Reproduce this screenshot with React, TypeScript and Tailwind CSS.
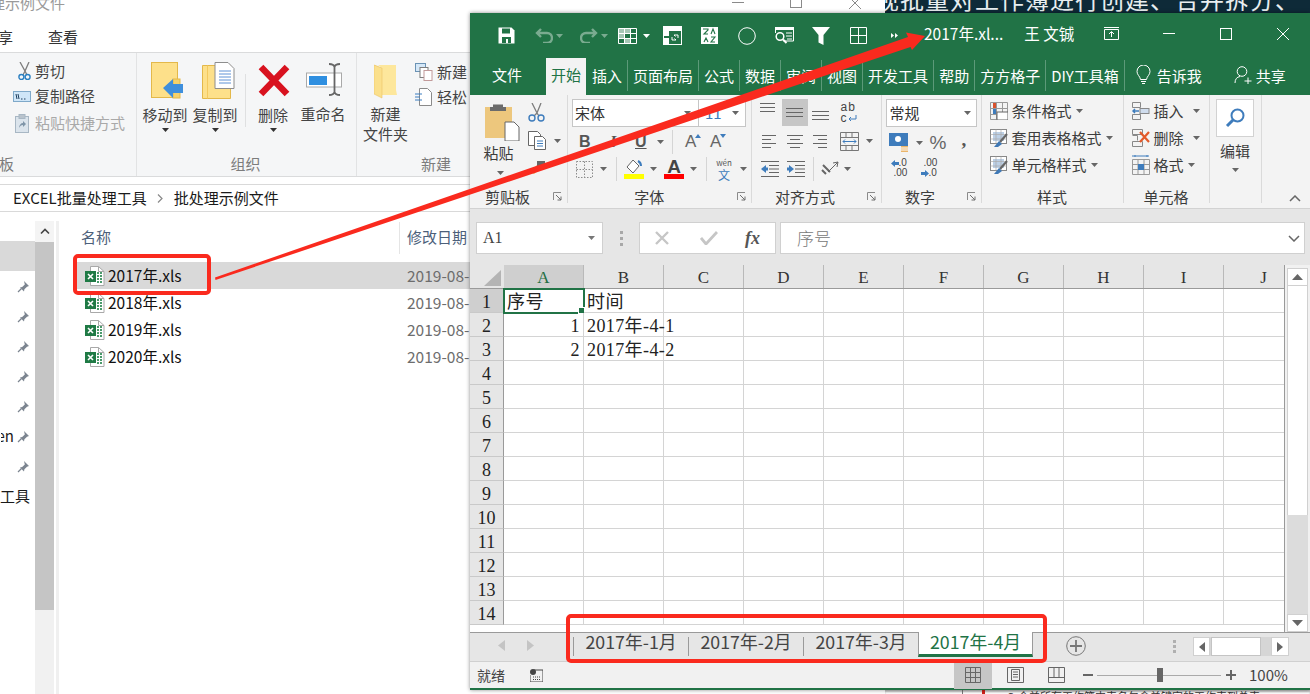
import React from "react";

const S = ({ w, h, vb, children, className }: { w: number; h: number; vb?: string; children: React.ReactNode; className?: string }) => (
  <svg width={w} height={h} viewBox={vb ?? `0 0 ${w} ${h}`} className={"shrink-0 block " + (className ?? "")} fill="none">{children}</svg>
);
const Caret = ({ c = "#666" }: { c?: string }) => (
  <S w={7} h={4}><path d="M0 0h7L3.500 4z" fill={c} /></S>
);

const Launcher = () => (
  <S w={9} h={9}><path d="M0.500 8V0.500H8" stroke="#8a8a8a" /><path d="M3 3l5 5M8 4.500V8H4.500" stroke="#6f6f6f" /></S>
);

const XlsIcon = () => (
  <S w={20} h={20}>
    <path d="M5.500 0.500h8l5.500 5v14H5.500z" fill="#fff" stroke="#a9a9a9" />
    <path d="M13.500 0.500v5H19" stroke="#a9a9a9" />
    <path d="M12 7h5M12 10h5M12 13h5M12 16h5" stroke="#4a9a6b" strokeWidth="2" strokeDasharray="2 1" />
    <rect x="0" y="5" width="11" height="11" fill="#1f7a45" />
    <path d="M3 8l5 5M8 8l-5 5" stroke="#fff" strokeWidth="1.600" />
  </S>
);

const Pin = () => (
  <S w={13} h={13}>
    <path d="M7 1l5 5-2 .7-2.600 2.600-.4 2.200L3 7.500l2.200-.4L7.800 4.500z" fill="#7c8590" />
    <path d="M4.500 8.500L1 12" stroke="#7c8590" strokeWidth="1.300" />
  </S>
);

function Explorer() {
  const pins = [0, 1, 2, 3, 4, 5, 6];
  return (
    <div className="absolute left-0 top-0 w-[885px] h-[694px] bg-white flex flex-col overflow-hidden">
      <div className="h-[27px] flex justify-between shrink-0 overflow-hidden">
        <div className="text-[15px] leading-[16px] -mt-[5px] -ml-[10px] text-[#9a9a9a] whitespace-nowrap">理示例文件</div>
        <div className="flex w-[130px] mr-[23px] gap-[46px] items-start">
          <div className="w-[12px] h-px bg-[#8a8a8a] mt-[2px]" />
          <div className="w-[12px] h-[8px] border border-t-0 border-[#8a8a8a]" />
          <S w={14} h={9}><path d="M1 -3l12 12M13 -3L1 9" stroke="#8a8a8a" /></S>
        </div>
      </div>
      <div className="h-[26px] shrink-0 flex text-[15px] leading-[20px] text-[#333] border-b border-[#dadbdc] pb-[6px]">
        <span className="w-[13px] overflow-hidden flex justify-end">享</span>
        <span className="ml-[35px]">查看</span>
      </div>
      <div className="h-[124px] shrink-0 bg-[#f5f6f7] border-b border-[#dadbdc] flex text-[15px] leading-[20px] text-[#444]">
        <div className="w-[137px] border-r border-[#e2e3e4] flex flex-col relative">
          <div className="flex flex-col pl-[13px] pt-[8px] gap-[5px]">
            <div className="flex items-center h-[20px]">
              <div className="w-[22px] flex justify-center">
                <S w={13} h={18}><path d="M2 0l5 9 4-9M7 9l-2 4M7 9l2 4" stroke="#7d7d7d" strokeWidth="1.300" /><circle cx="3.400" cy="15" r="2.500" stroke="#2a7fc1" strokeWidth="1.400" /><circle cx="9.600" cy="15" r="2.500" stroke="#2a7fc1" strokeWidth="1.400" /></S>
              </div>
              <span>剪切</span>
            </div>
            <div className="flex items-center h-[20px]">
              <div className="w-[22px] flex">
                <S w={18} h={11}><rect x="0.500" y="0.500" width="17" height="10" fill="#cfe6f8" stroke="#7fa9c9" /><path d="M3 3l1 5M5 3l1 5M8 8h1.500M11 8h1.500" stroke="#1c3d5c" /></S>
              </div>
              <span>复制路径</span>
            </div>
            <div className="flex items-center h-[20px] mt-[2px]">
              <div className="w-[22px] flex pl-[2px]">
                <S w={15} h={19}><rect x="0.500" y="2.500" width="13" height="16" fill="#dbe4ec" stroke="#a8b7c4" /><rect x="4" y="0.500" width="6" height="4" fill="#b9c3cc" stroke="#a8b7c4" /><path d="M4 14c0-3 2-5 4-5V7l3 3-3 3v-2c-2 0-3 1-4 3z" fill="#7f95a8" /></S>
              </div>
              <span className="text-[#a9a9a9]">粘贴快捷方式</span>
            </div>
          </div>
          <div className="absolute left-0 bottom-[2px] w-[14px] overflow-hidden text-[#7c7c7c] flex justify-end h-[20px]">板</div>
        </div>
        <div className="w-[220px] border-r border-[#e2e3e4] flex flex-col items-center">
          <div className="flex pt-[9px] h-[98px] w-full">
            <div className="w-[50px] ml-[3px] flex flex-col items-center">
              <div className="ml-[5px]">
                <S w={33} h={37}><rect x="0.500" y="0.500" width="26" height="35" fill="#fde08a" stroke="#e3b84a" /><rect x="22" y="17" width="7" height="19" fill="#f6d26b" stroke="#e3b84a" /><path d="M12 26l10-9v5h10v9H22v5z" fill="#3f8fdc" /></S>
              </div>
              <span className="mt-[6px] whitespace-nowrap">移动到</span>
              <div className="mt-[3px]"><Caret c="#333" /></div>
            </div>
            <div className="w-[50px] flex flex-col items-center">
              <div className="ml-[6px]">
                <S w={33} h={37}><path d="M0.500 3.500h28v33H0.500z" fill="#fde08a" stroke="#e3b84a" /><path d="M5.500 3.500v33" stroke="#f3c95f" /><path d="M13 0.500h13l6 6v20H13z" fill="#fff" stroke="#8e8e8e" /><path d="M17 9h12M17 12h12M17 15h12M17 18h12M17 21h12" stroke="#5f92d6" /></S>
              </div>
              <span className="mt-[6px] whitespace-nowrap">复制到</span>
              <div className="mt-[3px]"><Caret c="#333" /></div>
            </div>
            <div className="w-px h-[53px] bg-[#dfe0e1] mt-[12px] ml-[5px]" />
            <div className="w-[40px] ml-[7px] flex flex-col items-center">
              <div className="mt-[2px] ml-[2px]">
                <S w={32} h={33}><path d="M3 3l26 27M29 3L3 30" stroke="#d8121f" strokeWidth="6.500" /></S>
              </div>
              <span className="mt-[8px] whitespace-nowrap">删除</span>
              <div className="mt-[3px]"><Caret c="#333" /></div>
            </div>
            <div className="w-[50px] ml-[5px] flex flex-col items-center">
              <div className="ml-[2px] mt-[1px]">
                <S w={37} h={33}><rect x="0.500" y="10" width="35" height="14" fill="#fff" stroke="#a9a9a9" /><rect x="3" y="13" width="18" height="9" fill="#2f8fe0" /><path d="M23 1c4 0 5 1 5.500 3v25c.5 2 1.500 3 5.500 3M34 1c-4 0-5 1-5.500 3M23 32c4 0 5-1 5.500-3" stroke="#666" strokeWidth="1.800" /></S>
              </div>
              <span className="mt-[8px] whitespace-nowrap">重命名</span>
            </div>
          </div>
          <div className="text-[#7c7c7c] mt-[3px] -ml-[2px]">组织</div>
        </div>
        <div className="flex-1 flex flex-col relative">
          <div className="flex h-[98px] pt-[9px] w-[528px]">
            <div className="w-[47px] ml-[5px] flex flex-col items-center">
              <div className="ml-[1px] mt-[2px]">
                <S w={24} h={35}><path d="M0.500 1l7 3v28l-7-3z" fill="#f5cd6a" /><path d="M4 1h18v25l1 5H8V4z" fill="#fde79c" /><path d="M0 1l8 3v30L0 30z" fill="#fbe08c" stroke="#ecc564" strokeWidth=".6" /></S>
              </div>
              <div className="mt-[5px] text-center leading-[20px] whitespace-nowrap">新建<br />文件夹</div>
            </div>
            <div className="flex flex-col ml-[6px] gap-[5px]">
              <div className="flex items-center h-[20px] w-[60px]">
                <div className="w-[22px]"><S w={18} h={18}><rect x="0.500" y="0.500" width="10" height="8" fill="#d5e8f8" stroke="#6b93b5" /><rect x="5" y="4.500" width="8" height="10" fill="#fff" stroke="#7d7d7d" /><rect x="9" y="7.500" width="8" height="10" fill="#fff" stroke="#c29a9a" /></S></div>
                <span>新建</span>
              </div>
              <div className="flex items-center h-[20px] w-[60px]">
                <div className="w-[22px]"><S w={17} h={18}><path d="M4.500 0.500h8l4 4v13h-12z" fill="#fff" stroke="#8a8a8a" /><path d="M0 6h7M0 9h5M0 12h7" stroke="#3a7cc0" /></S></div>
                <span>轻松</span>
              </div>
            </div>
          </div>
          <div className="text-[#7c7c7c] mt-[3px] ml-[64px]">新建</div>
        </div>
      </div>
      <div className="h-[7px] shrink-0" />
      <div className="h-[28px] shrink-0 border-y border-[#d9d9d9] flex items-center text-[15px] text-[#1a1a1a] whitespace-nowrap">
        <span className="ml-[13px]">EXCEL批量处理工具</span>
        <svg width="6" height="9" className="ml-[10px]"><path d="M1 .5l4 4-4 4" stroke="#888" strokeWidth="1.200" fill="none" /></svg>
        <span className="ml-[11px]">批处理示例文件</span>
      </div>
      <div className="flex-1 flex pt-[9px] min-h-0">
        <div className="w-[35px] shrink-0 flex flex-col text-[15px] leading-[20px] text-[#1a1a1a]">
          <div className="h-[20px]" />
          <div className="h-[30px] bg-[#d9d9d9] shrink-0" />
          {pins.map((p) => (
            <div key={p} className="h-[30px] flex items-center justify-end shrink-0 pr-[5px]">
              {p === 5 && <span className="mr-[3px] w-[13px] overflow-hidden flex justify-end">en</span>}
              <Pin />
            </div>
          ))}
          <div className="w-[30px] overflow-hidden whitespace-nowrap mt-[5px]">工具</div>
        </div>
        <div className="w-[19px] shrink-0 bg-[#f1f1f1] flex flex-col">
          <div className="h-[21px] bg-[#f4f4f4] flex items-center justify-center">
            <svg width="10" height="7"><path d="M1 5.500l4-4 4 4" stroke="#444" strokeWidth="1.600" fill="none" /></svg>
          </div>
          <div className="h-[368px] bg-[#c5c5c5]" />
        </div>
        <div className="w-[3px] bg-[#f0f0f0] ml-[2px]" />
        <div className="flex-1 flex flex-col pl-[18px] text-[15.500px]">
          <div className="h-[33px] flex items-center text-[15px] text-[#4c607a]">
            <span className="ml-[4px] w-[318px]">名称</span>
            <div className="w-px h-[32px] bg-[#e5e5e5]" />
            <span className="ml-[7px] whitespace-nowrap">修改日期</span>
          </div>
          <div className="h-[8px]" />
          {["2017", "2018", "2019", "2020"].map((y, i) => (
            <div key={y} className={"h-[27px] shrink-0 flex items-center whitespace-nowrap " + (i === 0 ? "bg-[#d9d9d9]" : "")}>
              <div className="ml-[8px] w-[23px]"><XlsIcon /></div>
              <span className="w-[299px] text-[#111]">{y}年.xls</span>
              <span className="text-[#6d6d6d]">2019-08-</span>
            </div>
          ))}
        </div>
      </div>
    </div>
  );
}

const Qat = () => (
  <div className="flex items-center h-[45px] pl-[28px] text-white">
    <S w={17} h={17}><path d="M0.500 0.500h13l3 3v13h-16z" fill="#fff" /><rect x="4" y="1.500" width="8" height="5" fill="#217346" /><rect x="4" y="10" width="9" height="6" fill="#217346" /><rect x="8" y="12" width="2" height="4" fill="#fff" /></S>
    <div className="ml-[20px] opacity-40 flex items-center gap-[3px]">
      <S w={18} h={15}><path d="M2 5h10a5 5 0 0 1 0 10H8M6 1L2 5l4 4" stroke="#fff" strokeWidth="2.400" /></S>
      <Caret c="#fff" />
    </div>
    <div className="ml-[17px] opacity-40 flex items-center gap-[3px]">
      <S w={18} h={15}><path d="M16 5H6a5 5 0 0 0 0 10h4M12 1l4 4-4 4" stroke="#fff" strokeWidth="2.400" /></S>
      <Caret c="#fff" />
    </div>
    <div className="ml-[10px]">
      <S w={19} h={16}><path d="M0.500 0.500h18v15h-18zM0.500 5.500h18M0.500 10.500h18M6.500 .5v15M12.500 .5v15" stroke="#fff" /><path d="M1 1h11v4H1zM1 6h5v4H1zM7 11h5v4H7z" fill="#fff" fillOpacity=".6" /></S>
    </div>
    <div className="ml-[6px]"><Caret c="#fff" /></div>
    <div className="ml-[13px]">
      <S w={19} h={19}><rect x="0.500" y="0.500" width="18" height="18" stroke="#fff" /><rect x="1" y="1" width="17" height="4" fill="#fff" /><rect x="1" y="5" width="5" height="5" fill="#fff" /><rect x="1" y="12" width="5" height="6" fill="#fff" /><path d="M9 14h4l-1.500 -1.500M15 9h-4l1.500 1.500M15 9v3M9 14v-3" stroke="#fff" /></S>
    </div>
    <div className="ml-[19px]">
      <S w={17} h={17}><rect x="0" y="0" width="17" height="17" fill="#fff" /><path d="M2 2h5v1L3 7h4M10 7l2-5 2 5M3 15l2-4 2 4M10 10h4l-4 5h4" stroke="#217346" strokeWidth="1.100" /></S>
    </div>
    <div className="ml-[20px]">
      <S w={18} h={18}><circle cx="9" cy="9" r="8.300" stroke="#fff" /></S>
    </div>
    <div className="ml-[19px]">
      <S w={19} h={17}><path d="M0.500 1h18v13h-10" stroke="#fff" /><path d="M0.500 1v5" stroke="#fff" /><rect x="0" y="0" width="19" height="3" fill="#fff" /><circle cx="5" cy="9.500" r="3.800" stroke="#fff" strokeWidth="1.500" /><path d="M8 12.500l3.500 3.500" stroke="#fff" strokeWidth="2" /><path d="M11 6h6M11 9h6M12 12h5" stroke="#fff" /></S>
    </div>
    <div className="ml-[18px]">
      <S w={18} h={18}><path d="M0 0h18l-6.500 8v10l-5-2.500V8z" fill="#fff" /></S>
    </div>
    <div className="ml-[20px]">
      <S w={17} h={17}><path d="M0.500 0.500h16v16h-16zM8.500 0.500v16M0.500 8.500h16" stroke="#fff" /></S>
    </div>
    <div className="ml-[24px]">
      <S w={7} h={7}><path d="M0 1l3 2.500L0 6zM4 1l3 2.500L4 6z" fill="#fff" /></S>
    </div>
  </div>
);

const sep = "border-r border-[#5c9a79]";
const tabs = ["插入", "页面布局", "公式", "数据", "审阅", "视图", "开发工具", "帮助", "方方格子", "DIY工具箱"];

const Line = ({ w, c = "#666" }: { w: number; c?: string }) => <div className="h-px" style={{ width: w, background: c }} />;
const Stack = ({ ws, gap = 3 }: { ws: number[]; gap?: number }) => (
  <div className="flex flex-col items-center" style={{ gap }}>
    {ws.map((w, i) => <Line key={i} w={w} />)}
  </div>
);

const Brush = () => (
  <S w={18} h={19}><rect x="0.500" y="0.500" width="16" height="14" fill="#fff" stroke="#888" /><rect x="3" y="3" width="11" height="9" fill="#bcd0e6" /><path d="M0.500 5.500h16M0.500 10h16M6 .5v14M11 .5v14" stroke="#aaa" strokeWidth=".7" /><path d="M17 5l-7 8" stroke="#666" strokeWidth="2.200" /><path d="M9 12l3 3-4 3H4z" fill="#3f78b5" /></S>
);

function Ribbon() {
  const label = "h-[19px] shrink-0 text-center text-[15px] leading-[19px] text-[#3c3c3c] relative";
  const launch = "absolute right-[5px] top-[5px]";
  return (
    <div className="h-[114px] shrink-0 bg-[#f3f3f3] border-b border-[#d2d2d2] flex text-[15px] leading-[20px] text-[#3c3c3c]">
      <div className="w-[98px] border-r border-[#dadada] mb-[5px] flex flex-col">
        <div className="h-[90px] shrink-0 flex pt-[8px]">
          <div className="w-[58px] flex flex-col items-center">
            <div className="ml-[6px]">
              <S w={35} h={38}><path d="M0 4h27v31H0z" fill="#edc77d" /><path d="M8 4V1.500h10V4h3v4H5V4z" fill="#6b6b6b" /><path d="M20 19h9l5 5v14H20z" fill="#fff" stroke="#666" /></S>
            </div>
            <span className="mt-[2px] -ml-[1px]">粘贴</span>
            <div className="mt-[8px] ml-[2px]"><Caret /></div>
          </div>
          <div className="flex flex-col">
            <S w={17} h={19}><path d="M4 0l5 10 4-10M9 10l-3 3M9 10l2 3" stroke="#7d7d7d" strokeWidth="1.300" /><circle cx="4" cy="15" r="3" stroke="#3e7cbc" strokeWidth="1.400" /><circle cx="13" cy="15" r="3" stroke="#3e7cbc" strokeWidth="1.400" /></S>
            <div className="flex items-center mt-[9px]">
              <S w={18} h={19}><path d="M0.500 0.500h9l3 3v11h-12z" fill="#fff" stroke="#666" /><path d="M6.500 5.500h8l3 3v10h-11z" fill="#fff" stroke="#666" /><path d="M9 10h6M9 12.500h6M9 15h6" stroke="#3e7cbc" /></S>
              <div className="ml-[8px]"><Caret /></div>
            </div>
            <div className="mt-[10px]">
              <S w={18} h={16}><path d="M2 12l8-8 4 4-8 6z" fill="#eab56a" /><rect x="9" y="1" width="8" height="5" fill="#666" /></S>
            </div>
          </div>
        </div>
        <div className={label + " pr-[22px] mt-[2px]"}>剪贴板<span className={launch}><Launcher /></span></div>
      </div>
      <div className="w-[183.500px] border-r border-[#dadada] mb-[5px] flex flex-col pl-[4px]">
        <div className="h-[90px] shrink-0 pt-[4px] flex flex-col">
          <div className="flex h-[28px]">
            <div className="w-[127px] bg-white border border-[#c6c6c6] flex items-center pl-[2px] justify-between pr-[7px] text-[#333]">宋体<Caret /></div>
            <div className="w-[47px] bg-white border border-l-0 border-[#c6c6c6] flex items-center justify-between pl-[6px] pr-[6px] text-[#3e7cbc]">11<Caret /></div>
          </div>
          <div className="flex items-center h-[28px] mt-[1px] text-[#555]">
            <span className="ml-[7px] w-[31px] font-bold text-[16px] font-['Liberation_Sans',sans-serif]">B</span>
            <span className="w-[25px] italic font-bold text-[16px] font-['Liberation_Serif',serif]">I</span>
            <span className="underline font-bold text-[16px] w-[22px] font-['Liberation_Sans',sans-serif]">U</span>
            <Caret />
            <div className="w-px h-[24px] bg-[#d5d5d5] ml-[8px]" />
            <div className="ml-[12px] w-[25px] flex items-start">
              <span className="text-[17px] font-['Liberation_Sans',sans-serif] text-[#666]">A</span>
              <svg width="6" height="4" className="-ml-[1px] mt-[2px]"><path d="M0 4h6L3 0z" fill="#3e7cbc" /></svg>
            </div>
            <div className="w-[20px] flex items-start">
              <span className="text-[17px] font-['Liberation_Sans',sans-serif] text-[#666]">A</span>
              <svg width="6" height="4" className="-ml-[1px] mt-[2px]"><path d="M0 0h6L3 4z" fill="#3e7cbc" /></svg>
            </div>
          </div>
          <div className="flex items-center h-[26px]">
            <div className="ml-[4px]">
              <S w={17} h={17}><path d="M0.500 0.500h16v16h-16zM0.500 8.500h16M8.500 .5v16" stroke="#8c8c8c" strokeDasharray="1.500 1.500" /></S>
            </div>
            <div className="ml-[7px]"><Caret /></div>
            <div className="w-px h-[24px] bg-[#d5d5d5] ml-[9px]" />
            <div className="ml-[7px] flex flex-col items-start">
              <S w={20} h={15}><path d="M3 8l6-7 6 6-6 7z" fill="#fff" stroke="#666" /><path d="M14 2c2 1 3 3 3 5" stroke="#3e7cbc" strokeWidth="2" /></S>
              <div className="w-[20px] h-[5px] bg-[#ffff00]" />
            </div>
            <div className="ml-[6px]"><Caret /></div>
            <div className="ml-[7px] flex flex-col items-center w-[20px]">
              <span className="text-[19px] leading-[15px] font-bold text-[#444] font-['Liberation_Sans',sans-serif]">A</span>
              <div className="w-[20px] h-[5px] bg-[#ff0000]" />
            </div>
            <div className="ml-[6px]"><Caret /></div>
            <div className="w-px h-[24px] bg-[#d5d5d5] ml-[9px]" />
            <div className="ml-[8px] w-[18px] flex flex-col items-center">
              <span className="text-[8px] leading-[10px] text-[#555]">wén</span>
              <span className="text-[12px] leading-[13px] text-[#3e7cbc]">文</span>
            </div>
            <div className="ml-[7px]"><Caret /></div>
          </div>
        </div>
        <div className={label + " pr-[24px] mt-[2px]"}>字体<span className={launch}><Launcher /></span></div>
      </div>
      <div className="w-[130px] border-r border-[#dadada] mb-[5px] flex flex-col">
        <div className="h-[90px] shrink-0 pt-[4px] flex flex-col">
          <div className="flex h-[27px] items-start">
            <div className="ml-[8px] mt-[4px]"><Stack ws={[15, 15, 15]} /></div>
            <div className="ml-[7px] w-[26px] h-[27px] bg-[#c6c6c6] flex items-center justify-center"><Stack ws={[17, 17, 17]} /></div>
            <div className="ml-[4px] mt-[12px]"><Stack ws={[17, 17, 17]} /></div>
            <div className="ml-[12px] text-[12px] leading-[11px] text-[#444] font-['Liberation_Sans',sans-serif] mt-[3px] tracking-[1px]">
              <div>ab</div><div className="flex items-center">c<svg width="9" height="8"><path d="M8 0v4H1M3 2L1 4l2 2" stroke="#3e7cbc" fill="none" /></svg></div>
            </div>
          </div>
          <div className="flex items-center h-[28px] mt-[1px]">
            <div className="ml-[10px] w-[14px] flex flex-col items-start gap-[3px]"><Line w={14} /><Line w={9} /><Line w={14} /><Line w={9} /></div>
            <div className="ml-[11px]"><Stack ws={[16, 10, 16, 10]} /></div>
            <div className="ml-[10px] w-[14px] flex flex-col items-end gap-[3px]"><Line w={14} /><Line w={9} /><Line w={14} /><Line w={9} /></div>
            <div className="ml-[13px]">
              <S w={19} h={19}><path d="M0.500 0.500h18v18h-18zM0.500 5.500h18M0.500 13.500h18M6 .5v5M12 .5v5M6 13.500v5M12 13.500v5" stroke="#777" /><path d="M3 9.500h13M5 7.500l-2 2 2 2M14 7.500l2 2-2 2" stroke="#3e7cbc" /></S>
            </div>
            <div className="ml-[7px]"><Caret /></div>
          </div>
          <div className="flex items-center h-[26px] mt-[1px]">
            <div className="ml-[9px]">
              <S w={18} h={16}><path d="M0 .5h18M8 4.500h10M8 8h10M8 11.500h10M0 15.500h18" stroke="#666" /><path d="M0 8l5-4v8z" fill="#3e7cbc" /><rect x="4" y="6.500" width="3" height="3" fill="#3e7cbc" /></S>
            </div>
            <div className="ml-[8px]">
              <S w={18} h={16}><path d="M0 .5h18M8 4.500h10M8 8h10M8 11.500h10M0 15.500h18" stroke="#666" /><path d="M7 8L2 4v8z" fill="#3e7cbc" /><rect x="0" y="6.500" width="3" height="3" fill="#3e7cbc" /></S>
            </div>
            <div className="w-px h-[24px] bg-[#d5d5d5] ml-[8px]" />
            <div className="ml-[7px]">
              <S w={18} h={18}><path d="M12 3l5-1-1 5M17 2L7 12" stroke="#666" /><path d="M2 5l7 7M1 10l4 4" stroke="#666" strokeWidth="2" /></S>
            </div>
            <div className="ml-[5px]"><Caret /></div>
          </div>
        </div>
        <div className={label + " pr-[22px] mt-[2px]"}>对齐方式<span className={launch}><Launcher /></span></div>
      </div>
      <div className="w-[100px] border-r border-[#dadada] mb-[5px] flex flex-col">
        <div className="h-[90px] shrink-0 pt-[4px] flex flex-col">
          <div className="ml-[4px] w-[91px] h-[28px] bg-white border border-[#c6c6c6] flex items-center justify-between pl-[3px] pr-[5px] text-[#333]">常规<Caret /></div>
          <div className="flex items-center h-[28px] mt-[2px]">
            <div className="ml-[7px]">
              <S w={20} h={20}><rect x="0" y="0" width="19" height="13" fill="#3e7cbc" /><circle cx="9" cy="6" r="3" fill="#fff" /><path d="M12 13h7v6h-7z" fill="#eab56a" /><path d="M12 15h7M12 17h7" stroke="#fff" /></S>
            </div>
            <div className="ml-[7px]"><Caret /></div>
            <span className="ml-[7px] text-[19px] font-['Liberation_Sans',sans-serif] text-[#666]">%</span>
            <span className="ml-[15px] text-[19px] font-bold font-['Liberation_Serif',serif] text-[#555] -mt-[6px]">,</span>
          </div>
          <div className="flex h-[26px] mt-[1px] text-[10px] leading-[10px] text-[#444] font-['Liberation_Sans',sans-serif]">
            <div className="ml-[9px] w-[30px]">
              <div className="flex items-center"><svg width="8" height="7"><path d="M0 3.500L4 0v2h4v3H4v2z" fill="#3e7cbc" /></svg>.0</div>
              <div className="ml-[3px]">.00</div>
            </div>
            <div className="w-[30px]">
              <div className="ml-[3px]">.00</div>
              <div className="flex items-center"><svg width="8" height="7"><path d="M8 3.500L4 0v2H0v3h4v2z" fill="#3e7cbc" /></svg>.0</div>
            </div>
          </div>
        </div>
        <div className={label + " pr-[22px] mt-[2px]"}>数字<span className={launch}><Launcher /></span></div>
      </div>
      <div className="w-[142px] border-r border-[#dadada] mb-[5px] flex flex-col">
        <div className="h-[90px] shrink-0 pt-[6px] pl-[8px] flex flex-col gap-[7px]">
          <div className="flex items-center h-[20px]">
            <div className="w-[22px]"><S w={18} h={18}><path d="M0.500 0.500h17v17h-17zM0.500 6.500h17M0.500 12.500h17M6.500 .5v17M12.500 .5v17" stroke="#999" /><rect x="3" y="1" width="3" height="5" fill="#d9512c" /><rect x="3" y="7" width="3" height="5" fill="#3e7cbc" /><rect x="7" y="10" width="11" height="8" fill="#fff" stroke="#666" /></S></div>
            <span>条件格式</span><div className="ml-[4px]"><Caret /></div>
          </div>
          <div className="flex items-center h-[20px]">
            <div className="w-[22px]"><Brush /></div>
            <span>套用表格格式</span><div className="ml-[4px]"><Caret /></div>
          </div>
          <div className="flex items-center h-[20px]">
            <div className="w-[22px]"><Brush /></div>
            <span>单元格样式</span><div className="ml-[4px]"><Caret /></div>
          </div>
        </div>
        <div className={label + " mt-[2px]"}>样式</div>
      </div>
      <div className="w-[86px] border-r border-[#dadada] mb-[5px] flex flex-col">
        <div className="h-[90px] shrink-0 pt-[6px] pl-[8px] flex flex-col gap-[7px]">
          <div className="flex items-center h-[20px]">
            <div className="w-[22px]"><S w={18} h={18}><path d="M0.500 0.500h8v5h-8zM0.500 12.500h8v5h-8zM8.500 12.500v5" stroke="#888" /><rect x="8" y="6.500" width="9" height="5" stroke="#888" fill="#cfdced" /><path d="M7 9H1M3 7L1 9l2 2" stroke="#3e7cbc" strokeWidth="1.500" /></S></div>
            <span>插入</span><div className="ml-[9px]"><Caret /></div>
          </div>
          <div className="flex items-center h-[20px]">
            <div className="w-[22px]"><S w={19} h={18}><path d="M0.500 0.500h10v5h-10zM0.500 12.500h10v5h-10zM0.500 6.500h5v5" stroke="#888" /><path d="M8 3l9 10M17 3L8 13" stroke="#e35a2a" strokeWidth="2.200" /></S></div>
            <span>删除</span><div className="ml-[9px]"><Caret /></div>
          </div>
          <div className="flex items-center h-[20px]">
            <div className="w-[22px]"><S w={18} h={20}><path d="M0 1h17M3 0v2M15 0v2" stroke="#3e7cbc" /><path d="M0.500 4.500h17v15h-17zM0.500 9.500h17M0.500 14.500h17M6 4.500v15M12 4.500v15" stroke="#999" /><rect x="6" y="9" width="6" height="6" fill="#3e7cbc" /></S></div>
            <span>格式</span><div className="ml-[4px]"><Caret /></div>
          </div>
        </div>
        <div className={label + " mt-[2px]"}>单元格</div>
      </div>
      <div className="w-[52px] border-r border-[#dadada] mb-[5px] flex flex-col items-center">
        <div className="mt-[4px] w-[38px] h-[38px] bg-white border border-[#d2d2d2] flex items-center justify-center">
          <S w={20} h={21}><circle cx="12.500" cy="7.500" r="6" stroke="#3e7cbc" strokeWidth="2" /><path d="M8 12l-6 6" stroke="#3e7cbc" strokeWidth="3" /></S>
        </div>
        <span className="mt-[4px]">编辑</span>
        <div className="mt-[7px]"><Caret /></div>
      </div>
      <div className="flex-1 flex justify-end items-end pr-[9px] pb-[6px]">
        <svg width="12" height="7"><path d="M1 6l5-5 5 5" stroke="#666" strokeWidth="1.500" fill="none" /></svg>
      </div>
    </div>
  );
}

function FormulaBar() {
  return (
    <div className="h-[56px] shrink-0 bg-[#e6e6e6] flex items-center pt-[2px] pl-[6px] pr-[5px]">
      <div className="w-[127px] h-[32px] bg-white border border-[#d0d0d0] flex items-center justify-between pl-[6px] pr-[7px] font-['Liberation_Serif','Noto_Sans_CJK_SC',serif] text-[16px] text-[#444]">A1<Caret c="#777" /></div>
      <div className="ml-[17px] w-[3px] flex flex-col gap-[3px]">
        <div className="h-[3px] bg-[#a8a8a8]" /><div className="h-[3px] bg-[#a8a8a8]" /><div className="h-[3px] bg-[#a8a8a8]" />
      </div>
      <div className="ml-[16px] w-[137px] h-[32px] bg-white border border-[#d0d0d0] flex items-center pl-[14px]">
        <S w={16} h={14}><path d="M2 1l12 12M14 1L2 13" stroke="#c6c6c6" strokeWidth="2.400" /></S>
        <div className="ml-[30px]"><S w={18} h={14}><path d="M1 7l5 6L17 1" stroke="#c6c6c6" strokeWidth="2.800" /></S></div>
        <span className="ml-[27px] italic font-bold text-[18px] text-[#555] font-['Liberation_Serif',serif]">fx</span>
      </div>
      <div className="ml-[4px] flex-1 h-[32px] bg-white border border-[#d0d0d0] flex items-center justify-between pl-[16px] pr-[4px] text-[17px] text-[#777] font-light">
        序号
        <svg width="12" height="7"><path d="M1 1l5 5 5-5" stroke="#666" strokeWidth="1.500" fill="none" /></svg>
      </div>
    </div>
  );
}

const cols = ["A", "B", "C", "D", "E", "F", "G", "H", "I", "J"];
const cellFont = "font-['Liberation_Serif','Noto_Sans_CJK_SC',serif] text-[18px]";

function Grid() {
  const rows = Array.from({ length: 14 }, (_, i) => i + 1);
  const data: Record<string, { t: string; right?: boolean }> = {
    "1-A": { t: "序号" },
    "1-B": { t: "时间" },
    "2-A": { t: "1", right: true },
    "2-B": { t: "2017年-4-1" },
    "3-A": { t: "2", right: true },
    "3-B": { t: "2017年-4-2" },
  };
  return (
    <div className="flex-1 flex min-h-0">
      <div className="w-[815px] shrink-0 flex flex-col overflow-hidden border-r border-[#9a9a9a] bg-white">
        <div className="flex h-[24px] shrink-0 bg-[#e6e6e6] border-b border-[#9a9a9a] font-['Liberation_Serif',serif] text-[17px]">
          <div className="w-[34px] shrink-0 flex items-end justify-end pr-[3px] pb-[2px]">
            <S w={17} h={16}><path d="M17 0v16H0z" fill="#b4b4b4" /></S>
          </div>
          {cols.map((c, i) => (
            <div key={c} className={"w-[80px] shrink-0 flex items-center justify-center pt-[3px] border-r border-[#b9b9b9] " + (i === 0 ? "bg-[#cfcfcf] text-[#1f6e43]" : "text-[#333]")}>{c}</div>
          ))}
        </div>
        {rows.map((r) => (
          <div key={r} className={"flex h-[24px] shrink-0 " + cellFont}>
            <div className={"w-[34px] shrink-0 flex items-center justify-center pt-[3px] border-r border-b border-r-[#9a9a9a] border-b-[#c9c9c9] text-[#222] " + (r === 1 ? "bg-[#cfcfcf] text-[#1f6e43]" : "bg-[#e6e6e6]")}>{r}</div>
            {cols.map((c) => {
              const d = data[`${r}-${c}`];
              const sel = r === 1 && c === "A";
              return (
                <div key={c} className={"relative w-[80px] shrink-0 flex items-center pt-[3px] border-r border-b border-[#d4d4d4] whitespace-nowrap text-[#222] tracking-[0.4px] " + (d?.right ? "justify-end pr-[3px]" : "pl-[3px]")}>
                  {d?.t}
                  {sel && <div className="absolute -left-[1px] -top-[1px] w-[82px] h-[26px] border-2 border-[#217346]" />}
                  {sel && <div className="absolute -right-[2px] -bottom-[2px] w-[5px] h-[5px] bg-[#217346] border border-white box-content" />}
                </div>
              );
            })}
          </div>
        ))}
      </div>
      <div className="flex-1 flex flex-col pl-[2px] pr-[2px] pt-[3px] bg-[#f1f1f1]">
        <div className="h-[18px] bg-white border border-[#d0d0d0] flex items-center justify-center">
          <svg width="11" height="6"><path d="M0 6h11L5.500 0z" fill="#666" /></svg>
        </div>
        <div className="h-[229px] bg-white border-x border-[#d0d0d0]" />
        <div className="flex-1 bg-[#dcdcdc]" />
        <div className="h-[18px] bg-white border border-[#d0d0d0] flex items-center justify-center">
          <svg width="11" height="6"><path d="M0 0h11L5.500 6z" fill="#666" /></svg>
        </div>
      </div>
    </div>
  );
}

function SheetTabs() {
  const names = ["2017年-1月", "2017年-2月", "2017年-3月"];
  return (
    <div className="h-[29px] shrink-0 bg-[#e6e6e6] border-t border-[#9a9a9a] flex items-start text-[17.800px] leading-[22px] text-[#444]">
      <div className="w-[103px] h-[25px] flex items-center pl-[28px] gap-[22px]">
        <svg width="7" height="11"><path d="M7 0v11L0 5.500z" fill="#c4c4c4" /></svg>
        <svg width="7" height="11"><path d="M0 0v11l7-5.500z" fill="#c4c4c4" /></svg>
      </div>
      {names.map((n) => (
        <div key={n} className="w-[115px] mt-[4px] h-[19px] border-l border-[#9a9a9a] flex items-center justify-center whitespace-nowrap">
          <span className="-mt-[12px]">{n}</span>
        </div>
      ))}
      <div className="w-[115px] h-[25px] bg-white border-x border-[#9a9a9a] border-b-[3px] border-b-[#217346] flex items-center justify-center whitespace-nowrap text-[#217346] -mt-px">
        <span className="-mt-[5px]">2017年-4月</span>
      </div>
      <div className="ml-[33px] mt-[3px]">
        <S w={20} h={20}><circle cx="10" cy="10" r="9.300" stroke="#777" /><path d="M10 4v12M4 10h12" stroke="#777" strokeWidth="1.800" /></S>
      </div>
      <div className="ml-[87px] mt-[7px] w-[3px] flex flex-col gap-[2px]">
        <div className="h-[3px] bg-[#b0b0b0]" /><div className="h-[3px] bg-[#b0b0b0]" /><div className="h-[3px] bg-[#b0b0b0]" />
      </div>
      <div className="ml-[17px] mt-[4px] flex h-[19px] w-[96px] bg-[#d6d6d6]">
        <div className="w-[17px] bg-white border border-[#d0d0d0] flex items-center justify-center"><svg width="6" height="10"><path d="M6 0v10L0 5z" fill="#666" /></svg></div>
        <div className="w-[50px] ml-px bg-white border border-[#c4c4c4]" />
        <div className="w-[18px] ml-auto bg-white border border-[#d0d0d0] flex items-center justify-center"><svg width="6" height="10"><path d="M0 0v10l6-5z" fill="#666" /></svg></div>
      </div>
    </div>
  );
}

function StatusBar() {
  return (
    <div className="h-[29px] shrink-0 bg-[#f1f1f1] border-t border-[#d0d0d0] border-b-2 border-b-[#217346] flex items-center text-[14px] text-[#444]">
      <span className="ml-[7px]">就绪</span>
      <div className="ml-[25px]">
        <S w={13} h={13}><circle cx="3" cy="3" r="3" fill="#444" /><path d="M4 1h9v12H0V6" stroke="#444" /><path d="M3 8h8M3 10.500h8" stroke="#444" strokeDasharray="1 1" /></S>
      </div>
      <div className="ml-[411px] w-[38px] h-[27px] bg-[#c6c6c6] flex items-center justify-center">
        <S w={16} h={16}><path d="M0.500 .5h15v15H.5zM.5 5.500h15M.5 10.500h15M5.500 .5v15M10.500 .5v15" stroke="#666" /></S>
      </div>
      <div className="ml-[15px]">
        <S w={17} h={16}><path d="M0.500 .5h16v15H.5z" stroke="#666" /><path d="M4.500 2.500h8v11h-8zM6 5h5M6 7.500h5M6 10h5" stroke="#666" /></S>
      </div>
      <div className="ml-[24px]">
        <S w={17} h={16}><path d="M0.500 .5h16v15H.5zM.5 10.500h16M6 .5v10M11 .5v10" stroke="#666" /></S>
      </div>
      <div className="ml-[18px] w-[10px] h-[2px] bg-[#666]" />
      <div className="ml-[4px] w-[124px] h-px bg-[#aaa] relative">
        <div className="absolute left-[60px] -top-[7px] w-[6px] h-[14px] bg-[#666]" />
      </div>
      <div className="ml-[5px]">
        <S w={10} h={10}><path d="M5 0v10M0 5h10" stroke="#666" strokeWidth="2" /></S>
      </div>
      <span className="ml-[13px] text-[15px] text-[#444]">100%</span>
    </div>
  );
}

function Excel() {
  return (
    <div className="absolute left-[470px] top-[13px] w-[840px] h-[677px] flex flex-col shadow-[0_0_4px_rgba(0,0,0,0.45)]">
      <div className="h-[45px] shrink-0 bg-[#217346] flex items-center text-white text-[15.500px] relative">
        <Qat />
        <div className="flex items-center pb-[4px]">
          <span className="ml-[26px] whitespace-nowrap">2017年.xl...</span>
          <span className="ml-[21px] whitespace-nowrap">王 文铖</span>
          <div className="ml-[30px]">
            <S w={15} h={13}><path d="M0.500 2.500h14v10H.5zM0 .5h15M7.500 10V5M5 7l2.500-2.500L10 7" stroke="#fff" /></S>
          </div>
          <div className="ml-[44px] w-[12px] h-px bg-white" />
          <div className="ml-[45px] w-[12px] h-[12px] border border-white" />
          <div className="ml-[45px]"><S w={12} h={12}><path d="M0 0l12 12M12 0L0 12" stroke="#fff" /></S></div>
        </div>
      </div>
      <div className="h-[37px] shrink-0 bg-[#217346] flex items-start text-white text-[15px] leading-[20px] whitespace-nowrap">
        <span className="ml-[22px] mt-[7px]">文件</span>
        <div className="ml-[24px] w-[40px] h-[38px] -mt-px bg-[#f3f3f3] text-[#217346] flex items-center justify-center pb-[2px]">开始</div>
        <div className={"h-[31px] mt-[2px] flex items-center pl-[6px] pr-[5px] " + sep}>{tabs[0]}</div>
        {tabs.slice(1).map((t) => (
          <div key={t} className={"h-[31px] mt-[2px] flex items-center px-[5px] " + sep}>{t}</div>
        ))}
        <div className="ml-[11px] mt-[7px]">
          <S w={15} h={20}><path d="M4.500 14.500C4 11 1 10 1 6.500a6.500 6.500 0 0 1 13 0c0 3.500-3 4.500-3.500 8z" stroke="#fff" /><path d="M5 16.500h5M6 18.500h3" stroke="#fff" /></S>
        </div>
        <span className="ml-[6px] mt-[8px]">告诉我</span>
        <div className="ml-[32px] mt-[8px]">
          <S w={18} h={18}><circle cx="8" cy="5.500" r="4.800" stroke="#fff" /><path d="M1 17c0-4 2-6 5-6.500M10.500 15h7M14 11.500v6.500" stroke="#fff" /></S>
        </div>
        <span className="ml-[4px] mt-[8px]">共享</span>
      </div>
      <Ribbon />
      <FormulaBar />
      <Grid />
      <SheetTabs />
      <StatusBar />
    </div>
  );
}

function Annotations() {
  return (
    <>
      <div className="absolute left-[73px] top-[254px] w-[138px] h-[41px] border-[4px] border-[#fa2a1e] rounded-[5px]" />
      <div className="absolute left-[566px] top-[614px] w-[481px] h-[49px] border-[4px] border-[#fa2a1e] rounded-[5px]" />
      <svg width="1310" height="694" className="absolute left-0 top-0 pointer-events-none">
        <polygon points="215,277.500 908,37 906,32.500 925,36 912,50 910.500,47 215.500,280" fill="#fa2a1e" />
      </svg>
    </>
  );
}

export default function App() {
  return (
    <div className="relative w-[1310px] h-[694px] overflow-hidden bg-white font-['Noto_Sans_CJK_SC','Noto_Sans',sans-serif]">
      <div className="absolute left-[885px] top-0 w-[425px] h-[13px] bg-[#0e2a38] overflow-hidden text-[#e8eef0] text-[24px] leading-[24px] whitespace-nowrap">
        <div className="-mt-[13px] -ml-[10px] tracking-[1px]">现批量对工作簿进行创建、合并拆分、</div>
      </div>
      <div className="absolute left-[885px] top-[690px] w-[425px] h-[4px] bg-white overflow-hidden text-[#333] text-[11px] leading-[12px] whitespace-nowrap flex shadow-[inset_0_2px_2px_rgba(0,0,0,0.25)]">
        <div className="ml-[77px] w-px h-[4px] bg-[#777]" />
        <div className="ml-[19px] w-[3px] h-[4px] bg-[#d0201a]" />
        <div className="ml-[23px]">3-合并所有工作簿内表名包含关键字的工作表到总表</div>
      </div>
      <Explorer />
      <Excel />
      <Annotations />
    </div>
  );
}
